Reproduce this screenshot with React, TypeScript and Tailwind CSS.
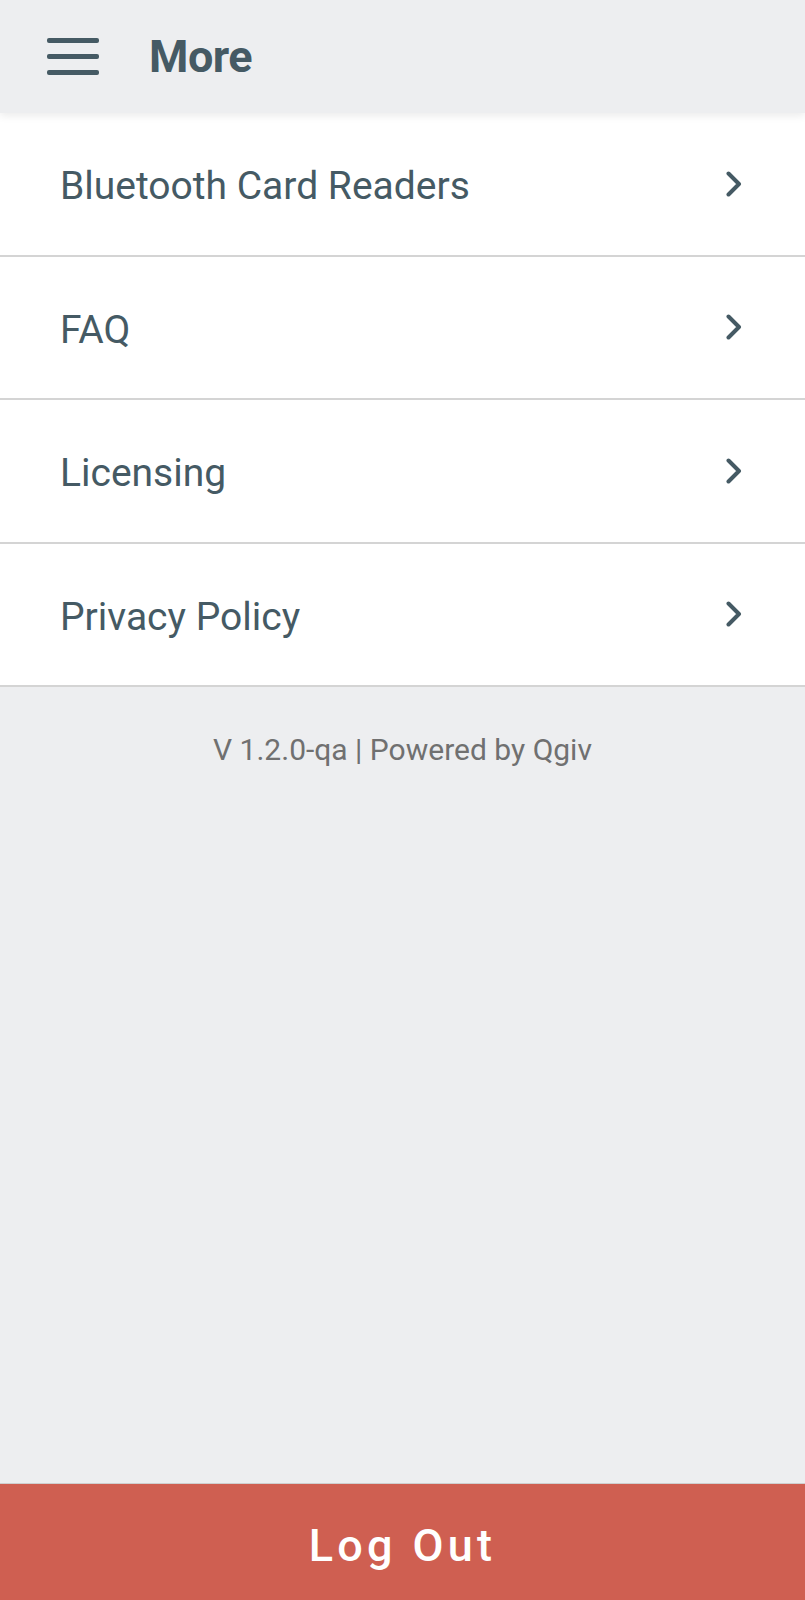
const items = ["Bluetooth Card Readers", "FAQ", "Licensing", "Privacy Policy"];

function MenuIcon() {
  return (
    <svg width="52" height="38" viewBox="0 0 52 38" className="shrink-0">
      <rect x="0" y="0" width="52" height="5" rx="2" fill="#455a64" />
      <rect x="0" y="16" width="52" height="5" rx="2" fill="#455a64" />
      <rect x="0" y="32" width="52" height="5" rx="2" fill="#455a64" />
    </svg>
  );
}

function Chevron() {
  return (
    <svg width="16" height="26" viewBox="0 0 16 26" className="shrink-0">
      <polyline
        points="2.5,2.5 13,13 2.5,23.5"
        fill="none"
        stroke="#455a64"
        strokeWidth="4"
        strokeLinecap="round"
        strokeLinejoin="round"
      />
    </svg>
  );
}

export default function App() {
  return (
    <div className="flex min-h-[1600px] w-full flex-col bg-[#edeef0] font-['Roboto',sans-serif] text-[#455a64]">
      <header className="relative z-10 flex h-[113px] items-center bg-[#edeef0] pl-[47px] shadow-[0_3px_8px_rgba(0,0,0,0.08)]">
        <MenuIcon />
        <h1 className="ml-[50px] text-[45px] font-bold leading-none tracking-[-0.5px]">More</h1>
      </header>

      <ul className="bg-white">
        {items.map((item) => (
          <li
            key={item}
            className="flex h-[143.5px] items-center justify-between border-b-2 border-[#d4d4d4] pl-[60px] pr-[63px]"
          >
            <span className="pt-[6px] text-[39px] leading-none">{item}</span>
            <Chevron />
          </li>
        ))}
      </ul>

      <p className="pt-[48px] text-center text-[30px] leading-none text-[#707070]">
        V 1.2.0-qa | Powered by Qgiv
      </p>

      <div className="flex-1" />

      <button className="flex h-[117px] w-full items-center justify-center border-t border-[#cfcfcf] bg-[#cf5f51] pt-[6px] text-[45px] font-medium leading-none tracking-[4.3px] text-white">
        Log Out
      </button>
    </div>
  );
}
